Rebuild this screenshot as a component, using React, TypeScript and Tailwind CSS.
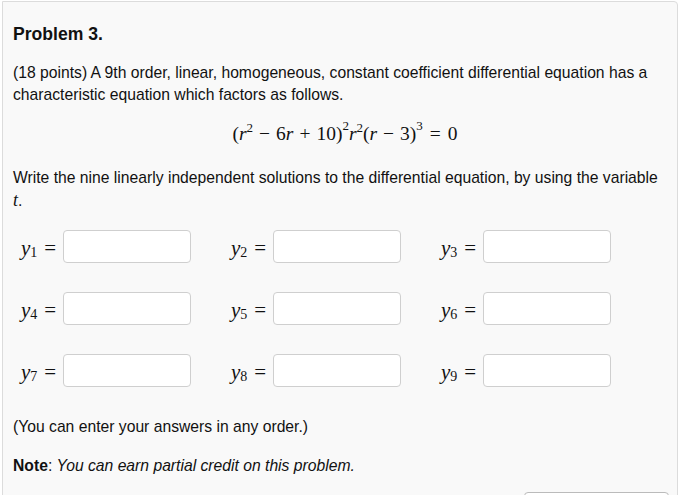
import React from "react";

const serif = { fontFamily: '"Liberation Serif", "DejaVu Serif", serif' };

function Sup({ c, high }: { c: string; high?: boolean }) {
  return (
    <span className={high ? "relative top-[-10px] text-[13px] leading-none" : "relative top-[-8px] text-[13px] leading-none"}>
      {c}
    </span>
  );
}

function Label({ n }: { n: number }) {
  return (
    <span className="flex items-end leading-none" style={serif}>
      <i className="text-[21px]">y</i>
      <span className="text-[14px] mb-[-1px]">{n}</span>
      <span className="ml-[7px] text-[21px]">=</span>
    </span>
  );
}

function Cell({ n }: { n: number }) {
  return (
    <div className="flex items-end">
      <div className="w-[42px] pb-[4px]">
        <Label n={n} />
      </div>
      <div className="w-[128px] h-[33px] bg-white border border-[#cfcfcf] rounded-[4px]" />
    </div>
  );
}

export default function App() {
  return (
    <div className="w-[681px] h-[495px] overflow-hidden bg-white" style={{ fontFamily: '"Liberation Sans", Arial, sans-serif' }}>
      <div className="ml-[2px] mt-[1px] w-[676px] h-[520px] border border-[#dcdcdc] rounded-tr-[4px] bg-[#f9f9f9] pl-[10px] pr-[8px] text-[#111]">
        <h1 className="mt-[21px] text-[17.6px] font-bold leading-[22px]">Problem 3.</h1>
        <p className="mt-[17px] text-[15.7px] leading-[22px]">
          (18 points) A 9th order, linear, homogeneous, constant coefficient differential equation has a characteristic equation which factors as follows.
        </p>
        <div className="mt-[16px] h-[24px] flex justify-center text-[19.5px] leading-[24px]" style={serif}>
          <span className="pl-[8px] whitespace-nowrap">
            (<i>r</i>
            <Sup c="2" />
            <span className="mx-[6px]">−</span>6<i>r</i>
            <span className="mx-[6px]">+</span>10)
            <Sup c="2" high />
            <i>r</i>
            <Sup c="2" />
            (<i>r</i>
            <span className="mx-[6px]">−</span>3)
            <Sup c="3" high />
            <span className="mx-[7px]">=</span>0
          </span>
        </div>
        <p className="mt-[21px] text-[15.7px] leading-[22px]">
          Write the nine linearly independent solutions to the differential equation, by using the variable
          <br />
          <i style={serif} className="text-[18px]">t</i>.
        </p>
        <div className="mt-[18px] ml-[8px] grid grid-cols-[210px_210px_210px] gap-y-[29px]">
          {[1, 2, 3, 4, 5, 6, 7, 8, 9].map((n) => (
            <Cell key={n} n={n} />
          ))}
        </div>
        <p className="mt-[29px] text-[15.7px] leading-[22px]">(You can enter your answers in any order.)</p>
        <p className="mt-[17px] text-[15.7px] leading-[22px]">
          <b>Note</b>: <i>You can earn partial credit on this problem.</i>
        </p>
        <div className="flex justify-end mt-[15px] pr-[0px]">
          <div className="w-[145px] h-[30px] border border-[#bbb] rounded-[4px] bg-white" />
        </div>
      </div>
    </div>
  );
}
